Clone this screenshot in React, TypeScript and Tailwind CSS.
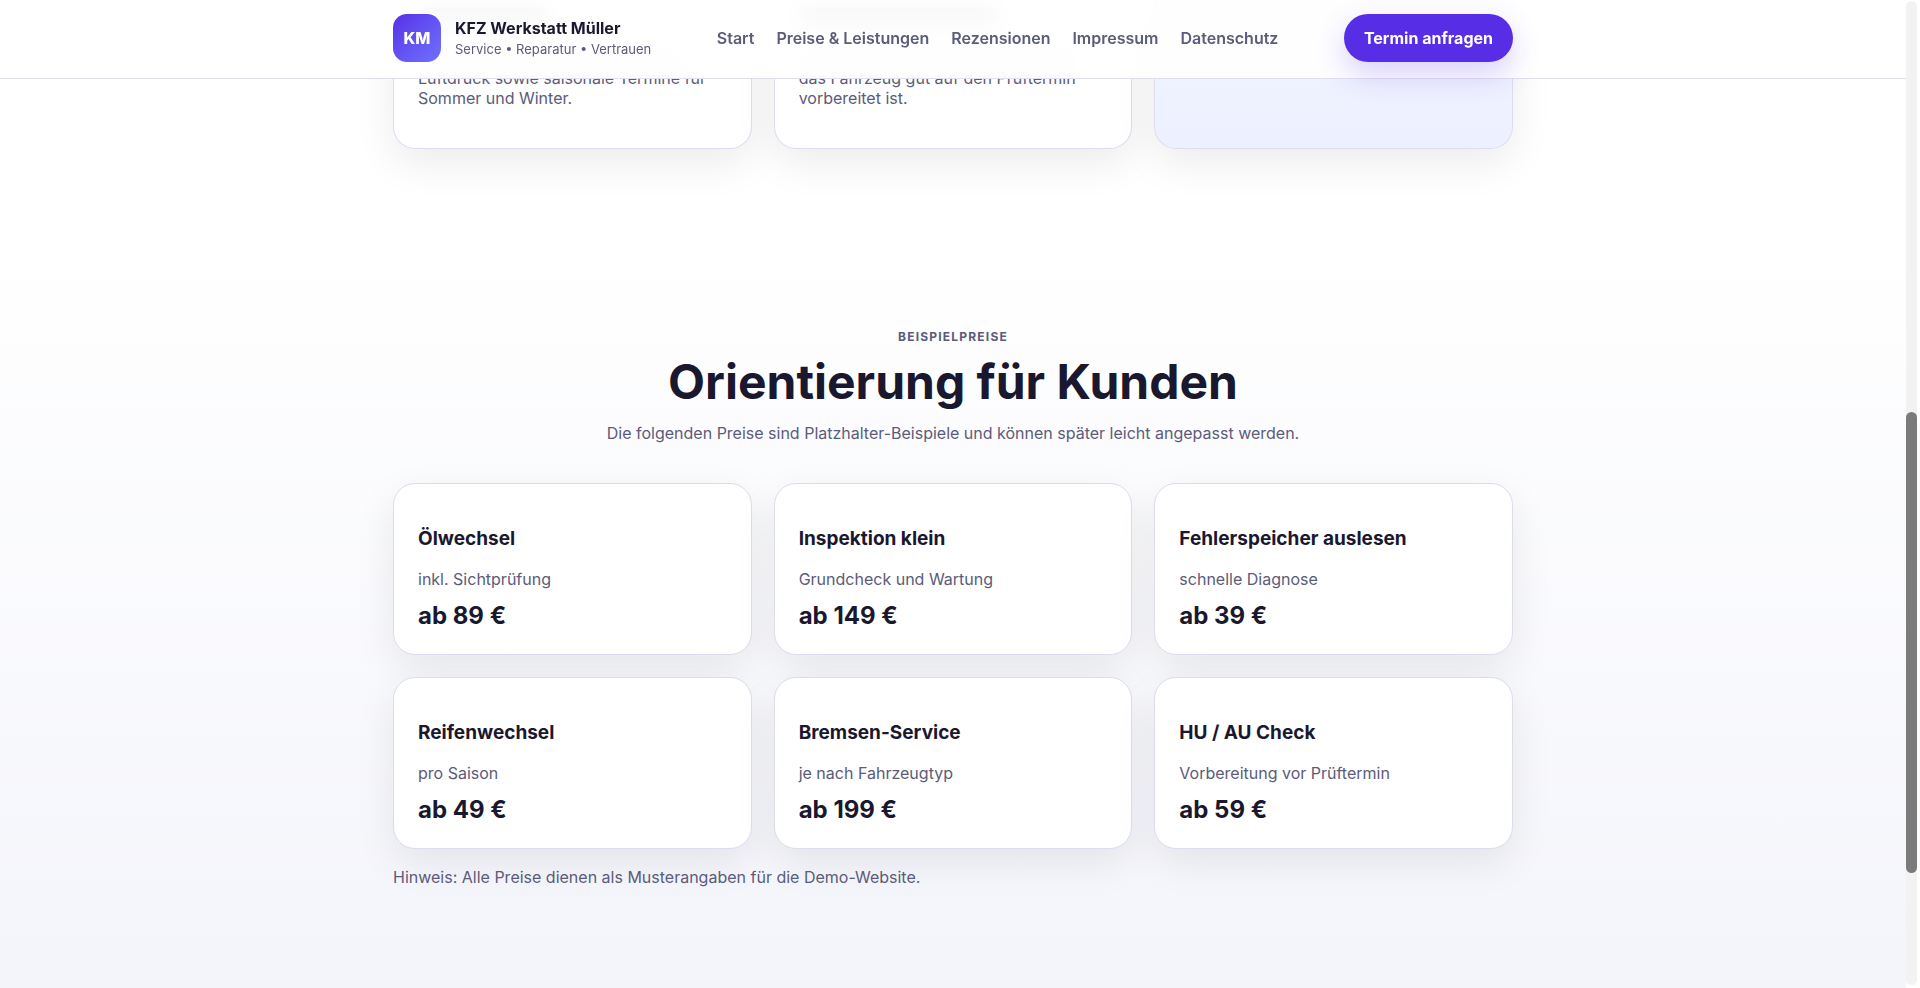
import React from "react";

const navLinks = [
  { name: "Start", href: "#start" },
  { name: "Preise & Leistungen", href: "#preise" },
  { name: "Rezensionen", href: "#rezensionen" },
  { name: "Impressum", href: "#impressum" },
  { name: "Datenschutz", href: "#datenschutz" },
];

const prices = [
  { title: "Ölwechsel", text: "inkl. Sichtprüfung", price: "ab 89 €" },
  { title: "Inspektion klein", text: "Grundcheck und Wartung", price: "ab 149 €" },
  { title: "Fehlerspeicher auslesen", text: "schnelle Diagnose", price: "ab 39 €" },
  { title: "Reifenwechsel", text: "pro Saison", price: "ab 49 €" },
  { title: "Bremsen-Service", text: "je nach Fahrzeugtyp", price: "ab 199 €" },
  { title: "HU / AU Check", text: "Vorbereitung vor Prüftermin", price: "ab 59 €" },
];

function Navbar() {
  return (
    <header className="fixed top-0 left-0 right-[14px] z-20 border-b border-[#dfdff0] bg-white/90 backdrop-blur-md">
      <div className="max-w-[1120px] mx-auto flex justify-between items-center pt-[14px] pb-4">
        <a href="#start" className="flex items-center gap-[14px]">
          <span className="w-12 h-12 rounded-[14px] bg-linear-135 from-[#572ee6] to-[#7070ff] text-white font-extrabold flex items-center justify-center">
            KM
          </span>
          <span className="flex flex-col">
            <span className="font-bold leading-[22px]">KFZ Werkstatt Müller</span>
            <span className="text-[13px] leading-5 text-[#5b5b7a]">
              Service • Reparatur • Vertrauen
            </span>
          </span>
        </a>

        <nav>
          <ul className="flex items-center gap-[22px] font-semibold text-[#5b5b7a]">
            {navLinks.map((link) => (
              <li key={link.name}>
                <a href={link.href}>{link.name}</a>
              </li>
            ))}
          </ul>
        </nav>

        <button className="h-12 px-5 rounded-full bg-[#572ee6] text-white font-bold shadow-[0_12px_30px_rgba(87,46,230,0.22)] cursor-pointer">
          Termin anfragen
        </button>
      </div>
    </header>
  );
}

const cardShadow = "shadow-[0_14px_40px_rgba(0,0,0,0.08)]";

function Services() {
  const card = `border border-t-0 border-[#dcdcee] rounded-b-[22px] px-6 pt-2 pb-10 ${cardShadow}`;

  return (
    <section className="pb-[90px]">
      <div className="max-w-[1120px] mx-auto grid grid-cols-3 gap-[22px]">
        <article className={`${card} bg-white`}>
          <div className="h-4 w-[130px] rounded-full bg-gray-400" />
          <div className="mt-7 mb-2 h-2 w-[260px] rounded-full bg-gray-300" />
          <p className="leading-5 text-[#5b5b7a]">
            Luftdruck sowie saisonale Termine für
            <br />
            Sommer und Winter.
          </p>
        </article>
        <article className={`${card} bg-white`}>
          <div className="h-4 w-[200px] rounded-full bg-gray-400" />
          <div className="mt-7 mb-2 h-2 w-[280px] rounded-full bg-gray-300" />
          <p className="leading-5 text-[#5b5b7a]">
            das Fahrzeug gut auf den Prüftermin
            <br />
            vorbereitet ist.
          </p>
        </article>
        <article className={`${card} bg-linear-to-b from-[#f0f3ff] to-[#edf0fe]`} />
      </div>
    </section>
  );
}

function Prices() {
  return (
    <section id="preise" className="grow bg-linear-to-b from-white to-[#f4f5fb] py-[90px]">
      <div className="max-w-[1120px] mx-auto">
        <div className="text-center">
          <p className="text-xs leading-4 font-bold uppercase tracking-widest text-[#5b5b7a]">
            Beispielpreise
          </p>
          <h2 className="mt-[9px] text-5xl leading-[56px] font-bold">Orientierung für Kunden</h2>
          <p className="mt-[13px] leading-5 text-[#5b5b7a]">
            Die folgenden Preise sind Platzhalter-Beispiele und können später leicht angepasst
            werden.
          </p>
        </div>

        <div className="mt-10 grid grid-cols-3 gap-[22px]">
          {prices.map((item) => (
            <article
              key={item.title}
              className={`bg-white border border-[#dcdcee] rounded-[22px] px-6 pt-[43px] pb-6 ${cardShadow}`}
            >
              <h3 className="text-[19px] leading-6 font-bold">{item.title}</h3>
              <p className="mt-[18px] leading-5 text-[#5b5b7a]">{item.text}</p>
              <p className="mt-3 text-2xl leading-[29px] font-bold">{item.price}</p>
            </article>
          ))}
        </div>

        <p className="mt-[18px] leading-5 text-[#5b5b7a]">
          Hinweis: Alle Preise dienen als Musterangaben für die Demo-Website.
        </p>
      </div>
    </section>
  );
}

function Scrollbar() {
  return (
    <div className="fixed inset-y-0 right-0 z-30 w-[14px] bg-white pt-px pb-[3px] pr-[3px]">
      <div className="h-full rounded-md bg-[#f2f2f2] pt-[411px]">
        <div className="h-[461px] rounded-md bg-[#7b7b7b]" />
      </div>
    </div>
  );
}

export default function App() {
  return (
    <div className="min-h-screen flex flex-col overflow-hidden pr-[14px] bg-white text-[#1a182e] text-base font-[Inter,sans-serif]">
      <Navbar />
      <Services />
      <Prices />
      <Scrollbar />
    </div>
  );
}
